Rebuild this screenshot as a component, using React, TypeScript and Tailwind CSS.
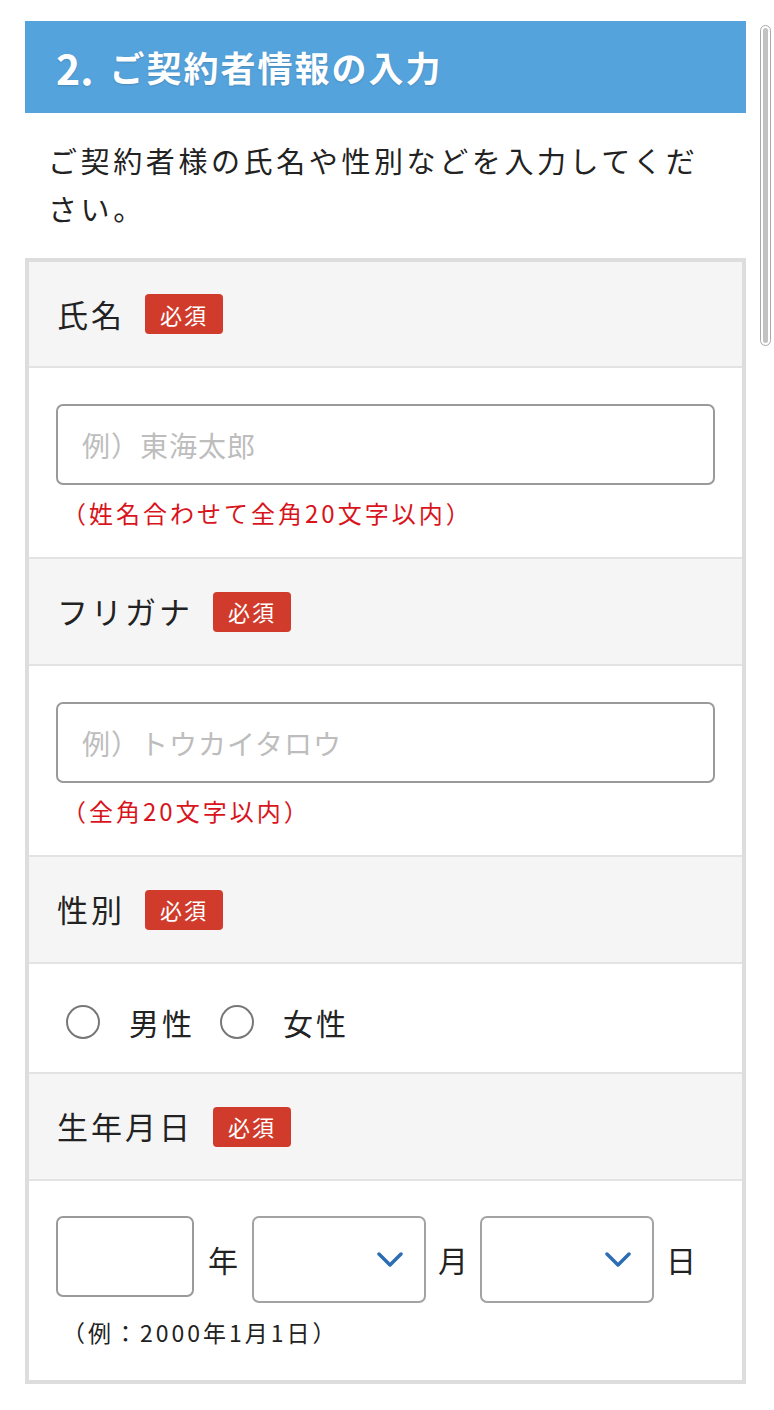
const FONT = '"Noto Sans CJK JP", "Noto Sans", sans-serif'

// ── Small parts ───────────────────────────────────────────────────────────────
function Badge() {
  return (
    <span className="ml-[20px] inline-flex h-[40px] w-[78px] items-center justify-center rounded-[4px] bg-[#d03b2b] text-[22px] tracking-[2px] text-white">
      必須
    </span>
  )
}

function SectionHead({ label, first }: { label: string; first?: boolean }) {
  return (
    <div
      className={`flex items-center border-b-2 border-[#e3e3e3] bg-[#f5f5f5] pl-[28px] ${first ? 'h-[106px]' : 'h-[107px]'}`}
    >
      <span className="text-[31px] tracking-[3px] text-[#222]">{label}</span>
      <Badge />
    </div>
  )
}

function TextRow({ placeholder, note }: { placeholder: string; note: string }) {
  return (
    <div className="flex h-[191px] flex-col border-b-2 border-[#e3e3e3] px-[27px] pt-[36px]">
      <div className="flex h-[81px] items-center rounded-[7px] border-2 border-[#9a9a9a] pl-[24px] text-[28px] tracking-[1px] text-[#bdbdbd]">
        {placeholder}
      </div>
      <p className="mt-[10px] pl-[6px] text-[24px] tracking-[3px] text-[#d8141c]">{note}</p>
    </div>
  )
}

function Radio({ label }: { label: string }) {
  return (
    <label className="flex items-center">
      <span className="h-[34px] w-[34px] rounded-full border-2 border-[#777]" />
      <span className="ml-[29px] text-[30px] tracking-[3px] text-[#222]">{label}</span>
    </label>
  )
}

function Chevron() {
  return (
    <svg width="26" height="16" viewBox="0 0 26 16" fill="none">
      <path d="M2 2 L13 13 L24 2" stroke="#2c6db4" strokeWidth="3.5" strokeLinecap="round" strokeLinejoin="round" />
    </svg>
  )
}

function SelectBox() {
  return (
    <div className="flex h-[87px] w-[174px] items-center justify-end rounded-[7px] border-2 border-[#a3a3a3] pr-[21px]">
      <Chevron />
    </div>
  )
}

// ── Page ──────────────────────────────────────────────────────────────────────
export default function App() {
  return (
    <div className="relative h-[1410px] w-[774px] overflow-hidden bg-white" style={{ fontFamily: FONT }}>
      {/* Overlay scrollbar */}
      <div className="absolute right-[3px] top-[25px] h-[321px] w-[11px] rounded-full border border-[#a8a8a8] bg-white p-[2px]">
        <div className="h-full w-full rounded-full bg-[#c2c2c2]" />
      </div>

      {/* Title bar */}
      <div className="ml-[25px] mt-[21px] flex h-[92px] w-[721px] items-center bg-[#55a3dc] pl-[31px]">
        <h2 className="flex items-center text-[35px] font-bold text-white [text-shadow:0_1px_2px_rgba(0,0,0,0.15)]">
          <span className="mr-[16px] text-[41px] leading-none">2.</span>
          <span className="tracking-[2px]">ご契約者情報の入力</span>
        </h2>
      </div>

      <p className="ml-[48px] mt-[23px] w-[670px] text-[29px] leading-[48px] tracking-[3.6px] text-[#222]">
        ご契約者様の氏名や性別などを入力してください。
      </p>

      {/* Form */}
      <div className="ml-[25px] mt-[26px] w-[721px] border-4 border-[#dddddd]">
        <SectionHead label="氏名" first />
        <TextRow placeholder="例）東海太郎" note="（姓名合わせて全角20文字以内）" />

        <SectionHead label="フリガナ" />
        <TextRow placeholder="例）トウカイタロウ" note="（全角20文字以内）" />

        <SectionHead label="性別" />
        <div className="flex h-[110px] items-center gap-[25px] border-b-2 border-[#e3e3e3] pl-[37px] pt-[8px]">
          <Radio label="男性" />
          <Radio label="女性" />
        </div>

        <SectionHead label="生年月日" />
        <div className="h-[199px] px-[27px] pt-[35px]">
          <div className="flex items-start text-[30px] text-[#222]">
            <div className="h-[81px] w-[138px] rounded-[7px] border-2 border-[#9a9a9a]" />
            <span className="mx-[14px] flex h-[87px] items-center">年</span>
            <SelectBox />
            <span className="mx-[12px] flex h-[87px] items-center">月</span>
            <SelectBox />
            <span className="mx-[12px] flex h-[87px] items-center">日</span>
          </div>
          <p className="mt-[12px] pl-[6px] text-[23px] tracking-[3px] text-[#222]">（例：2000年1月1日）</p>
        </div>
      </div>
    </div>
  )
}
